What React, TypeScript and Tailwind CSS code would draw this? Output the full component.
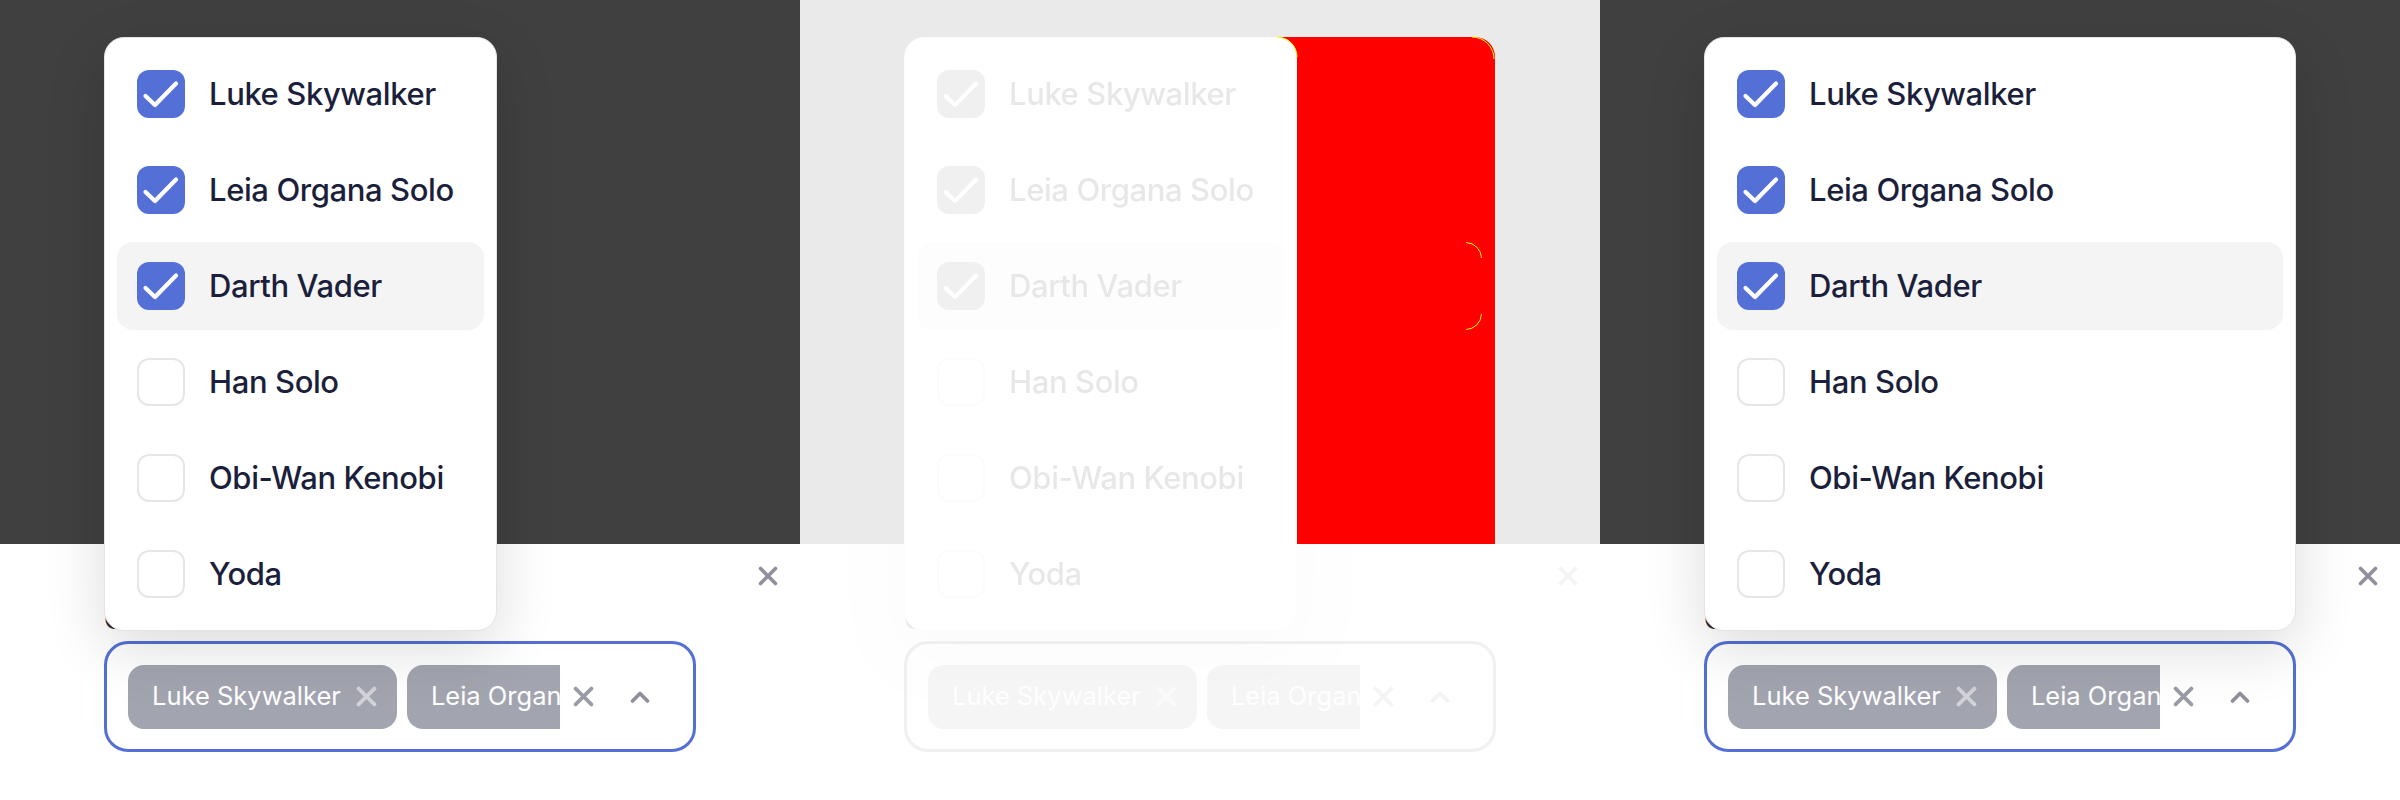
import React from "react";

const characters = [
  { name: "Luke Skywalker", checked: true },
  { name: "Leia Organa Solo", checked: true },
  { name: "Darth Vader", checked: true, active: true },
  { name: "Han Solo", checked: false },
  { name: "Obi-Wan Kenobi", checked: false },
  { name: "Yoda", checked: false },
];

const XIcon = ({ className, w = 3.6 }: { className: string; w?: number }) => (
  <svg viewBox="0 0 20 20" fill="none" stroke="currentColor" strokeWidth={w} strokeLinecap="round" className={className}>
    <path d="M2.5 2.5l15 15M17.5 2.5l-15 15" />
  </svg>
);

const Checkbox = ({ checked }: { checked: boolean }) =>
  checked ? (
    <div className="w-12 h-12 shrink-0 rounded-xl bg-[#5470d6] flex items-center justify-center">
      <svg viewBox="0 0 48 48" className="w-12 h-12" fill="none" stroke="white" strokeWidth={4.2} strokeLinecap="round" strokeLinejoin="round">
        <path d="M8.5 26l9.5 9L39 13.5" />
      </svg>
    </div>
  ) : (
    <div className="w-12 h-12 shrink-0 rounded-xl border-2 border-[#e6e6e6] bg-white" />
  );

const Chip = ({ label }: { label: string }) => (
  <div className="h-16 shrink-0 rounded-2xl bg-[#a2a4af] pl-6 pr-5 flex items-center gap-[15px]">
    <span className="text-[25.5px] text-white whitespace-nowrap">{label}</span>
    <XIcon className="w-[21px] h-[21px] text-[#d2d3d9]" />
  </div>
);

// one frame of the select: dialog bottom + open list
const Frame = ({ wide }: { wide: boolean }) => (
  <div className="relative w-[800px] h-[800px] bg-white overflow-hidden font-['Inter',sans-serif]">
    <div className="h-[544px] bg-[#404040]" />
    <div className="pt-[22px] pr-[22px]">
      <div className="flex justify-end h-5">
        <XIcon className="w-5 h-5 text-[#8f909c]" />
      </div>
      <p className="ml-[104px] mt-[15px] text-[28px] leading-[36px] font-medium text-[#1b1f3b]">Choose characters</p>
      <div className="ml-[104px] mt-[4px] w-[592px] h-[111px] border-[3px] border-[#5470d6] rounded-[24px] flex items-center pl-[21px]">
        <div className="w-[432px] flex gap-[10px] overflow-hidden">
          <Chip label="Luke Skywalker" />
          <Chip label="Leia Organa Solo" />
        </div>
        <XIcon className="ml-[13px] w-[21px] h-[21px] text-[#9b9ca7]" />
        <svg viewBox="0 0 20 12" fill="none" stroke="#8e8f9b" strokeWidth={3.6} strokeLinecap="round" strokeLinejoin="round" className="ml-9 w-5 h-3">
          <path d="M2.5 10L10 2.5l7.5 7.5" />
        </svg>
      </div>
    </div>

    {/* dropdown */}
    <div
      className={`absolute left-[104px] top-[37px] ${wide ? "w-[592px]" : "w-[393px]"} rounded-[20px] border border-[#e4e4e4] bg-white p-3 flex flex-col gap-2 shadow-[0_18px_60px_rgba(0,0,0,0.14)]`}
    >
      {characters.map((c) => (
        <div
          key={c.name}
          className={`h-[88px] rounded-2xl px-5 flex items-center gap-6 ${c.active ? "bg-[#f4f4f4]" : ""}`}
        >
          <Checkbox checked={c.checked} />
          <span className="text-[31px] font-medium tracking-[-0.4px] text-[#1b1f3b] whitespace-nowrap">{c.name}</span>
        </div>
      ))}
    </div>
  </div>
);

export default function App() {
  return (
    <div className="flex w-[2400px] h-[800px]">
      <Frame wide={false} />

      {/* diff view */}
      <div className="relative w-[800px] h-[800px] bg-white overflow-hidden">
        <div className="opacity-10 grayscale">
          <Frame wide={false} />
        </div>
        <svg className="absolute inset-0" width="800" height="800" viewBox="0 0 800 800">
          <path d="M477 37H675A20 20 0 0 1 695 57V544H497V57A20 20 0 0 0 477 37Z" fill="#ff0000" />
          <path d="M477 37A20 20 0 0 1 497 57" fill="none" stroke="#ffff00" strokeWidth={1} />
          <path d="M672 37A22 22 0 0 1 694 59" fill="none" stroke="#ffff00" strokeWidth={1} />
          <path d="M666 242.5A16 16 0 0 1 681.5 258" fill="none" stroke="#ffff00" strokeWidth={1} />
          <path d="M681.5 314A16 16 0 0 1 666 329.5" fill="none" stroke="#ffff00" strokeWidth={1} />
        </svg>
      </div>

      <Frame wide={true} />
    </div>
  );
}
